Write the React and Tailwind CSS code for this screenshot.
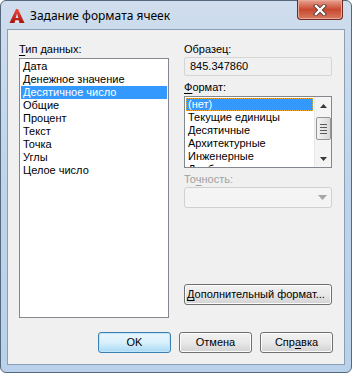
import React from "react";

const dataTypes = [
  "Дата",
  "Денежное значение",
  "Десятичное число",
  "Общие",
  "Процент",
  "Текст",
  "Точка",
  "Углы",
  "Целое число",
];

const formats = ["(нет)", "Текущие единицы", "Десятичные", "Архитектурные", "Инженерные", "Дробные"];

function AcadIcon() {
  return (
    <svg width="16" height="16" viewBox="0 0 16 16">
      <defs>
        <linearGradient id="ag" x1="0" y1="0" x2="0" y2="1">
          <stop offset="0" stopColor="#f04a3a" />
          <stop offset="1" stopColor="#a8140e" />
        </linearGradient>
      </defs>
      <path
        d="M7 1 L9 1 L15.5 15 L10.5 15 L9.6 12.6 L6.4 12.6 L5.5 15 L0.5 15 Z M8 5.5 L9.4 10 L6.6 10 Z"
        fill="url(#ag)"
        fillRule="evenodd"
      />
      <path d="M6.4 12.6 L9.6 12.6 L10.2 14.2 L5.8 14.2 Z" fill="#f5e8e6" />
    </svg>
  );
}

function Btn({ children, className = "", def = false }) {
  return (
    <div
      className={
        "h-[21px] rounded-[3px] border flex items-center justify-center text-[11px] text-black " +
        (def
          ? "border-[#3c7fb1] bg-gradient-to-b from-[#eaf6fd] via-[#d9f0fc] to-[#a7d9f5] shadow-[inset_0_0_0_1px_#c0e4f8] "
          : "border-[#707070] bg-gradient-to-b from-[#f2f2f2] via-[#e8e8e8] to-[#d2d2d2] shadow-[inset_0_0_0_1px_#fcfcfc] ") +
        className
      }
    >
      {children}
    </div>
  );
}

export default function App() {
  return (
    <div
      className="relative w-[352px] h-[373px] flex flex-col rounded-[6px] border border-[#56687d] bg-gradient-to-b from-[#cfdded] via-[#bfd4ea] to-[#b9d1ea] px-[6px] pb-[7px]"
      style={{ fontFamily: '"Liberation Sans", Arial, sans-serif' }}
    >
      <div className="h-[28px] flex items-center pl-[2px] pt-[2px]">
        <AcadIcon />
        <span
          className="ml-[5px] text-[12px] text-black"
          style={{ fontFamily: '"Noto Sans", "Open Sans", sans-serif' }}
        >
          Задание формата ячеек
        </span>
      </div>
      <div className="absolute left-[296px] top-[-1px] w-[46px] h-[20px] rounded-b-[4px] border border-[#6b2a22] border-t-0 bg-gradient-to-b from-[#e8a292] via-[#c8472f] to-[#d77a62] shadow-[inset_0_0_0_1px_#eba999] flex items-center justify-center">
        <svg width="14" height="12" viewBox="0 0 14 12">
          <path d="M3 2 L11 10 M11 2 L3 10" stroke="#5a3a36" strokeWidth="4.2" strokeLinecap="square" />
          <path d="M3 2 L11 10 M11 2 L3 10" stroke="#ffffff" strokeWidth="2.4" strokeLinecap="square" />
        </svg>
      </div>

      <div className="flex-1 border border-[#8b9fb6] bg-[#f0f0f0] flex flex-col text-[11px] text-black">
        <div className="flex pt-[13px] pl-[11px]">
          <div className="w-[150px] flex flex-col">
            <div className="h-[13px] leading-[13px]">
              <span className="underline underline-offset-[2px]">Т</span>ип данных:
            </div>
            <div className="mt-[2px] h-[260px] border border-[#828790] bg-white p-[1px]">
              {dataTypes.map((t, i) => (
                <div
                  key={t}
                  className={
                    "h-[13px] leading-[13px] pl-[2px] " + (i === 2 ? "bg-[#3399ff] text-white" : "")
                  }
                >
                  {t}
                </div>
              ))}
            </div>
          </div>

          <div className="ml-[15px] w-[148px] flex flex-col">
            <div className="h-[13px] leading-[13px]">Образец:</div>
            <div className="mt-[1px] h-[19px] rounded-[2px] border border-[#d5d5d5] bg-[#f0f0f0] pl-[5px] leading-[17px]">
              845.347860
            </div>
            <div className="mt-[5px] h-[13px] leading-[13px]">
              <span className="underline underline-offset-[2px]">Ф</span>ормат:
            </div>
            <div className="mt-[2px] h-[72px] border border-[#828790] bg-white flex overflow-hidden">
              <div className="flex-1 p-[1px] overflow-hidden">
                {formats.map((t, i) => (
                  <div
                    key={t}
                    className={
                      "h-[13px] leading-[11px] pl-[1px] whitespace-nowrap " +
                      (i === 0
                        ? "bg-[#3399ff] text-white border border-dotted border-[#f5a623]"
                        : "border border-transparent")
                    }
                  >
                    {t}
                  </div>
                ))}
              </div>
              <div className="w-[17px] bg-[#f4f4f4] border-l border-[#e8e8e8] flex flex-col items-center">
                <div className="h-[17px] flex items-center justify-center">
                  <svg width="7" height="4" viewBox="0 0 7 4">
                    <path d="M3.5 0 L7 4 L0 4 Z" fill="#3a3a3a" />
                  </svg>
                </div>
                <div className="mt-[3px] w-[15px] h-[23px] rounded-[2px] border border-[#959595] bg-gradient-to-r from-[#f3f3f3] to-[#d8d8d8] flex flex-col items-center justify-center gap-[2px]">
                  <div className="w-[7px] h-px bg-[#5a5a5a]" />
                  <div className="w-[7px] h-px bg-[#5a5a5a]" />
                  <div className="w-[7px] h-px bg-[#5a5a5a]" />
                  <div className="w-[7px] h-px bg-[#5a5a5a]" />
                </div>
                <div className="flex-1" />
                <div className="h-[17px] flex items-center justify-center">
                  <svg width="7" height="4" viewBox="0 0 7 4">
                    <path d="M0 0 L7 0 L3.5 4 Z" fill="#3a3a3a" />
                  </svg>
                </div>
              </div>
            </div>
            <div className="mt-[5px] h-[13px] leading-[13px] text-[#a0a0a0]">
              То<span className="underline underline-offset-[2px]">ч</span>ность:
            </div>
            <div className="mt-[1px] h-[21px] rounded-[3px] border border-[#d0d0d0] bg-[#f4f4f4] flex items-center justify-end pr-[4px]">
              <svg width="9" height="5" viewBox="0 0 9 5">
                <path d="M0 0 L9 0 L4.5 5 Z" fill="#a6a6a6" />
              </svg>
            </div>
            <Btn className="mt-[76px] w-[148px] justify-start">
              <span className="pl-[2px]">
                <span className="underline underline-offset-[2px]">Д</span>ополнительный формат...
              </span>
            </Btn>
          </div>
        </div>

        <div className="mt-[14px] flex justify-end gap-[8px] pr-[11px]">
          <Btn def className="w-[73px]">OK</Btn>
          <Btn className="w-[73px]">Отмена</Btn>
          <Btn className="w-[73px]">
            <span>
              Спр<span className="underline underline-offset-[2px]">а</span>вка
            </span>
          </Btn>
        </div>
      </div>
    </div>
  );
}
